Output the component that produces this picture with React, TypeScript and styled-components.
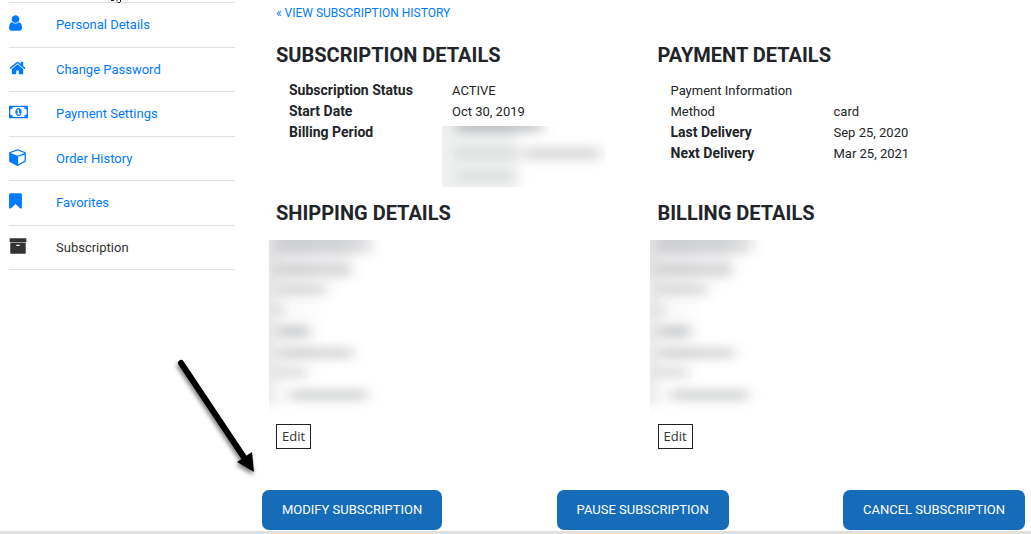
import React from "react";
import styled, { createGlobalStyle } from "styled-components";

const GlobalStyle = createGlobalStyle`
  * { box-sizing: border-box; }
  body {
    margin: 0;
    background: #fff;
    color: #212529;
    font-family: Roboto, "Liberation Sans", sans-serif;
    font-size: 13px;
    line-height: 21px;
    overflow-x: hidden;
  }
  a { color: #007bff; text-decoration: none; }
`;

const Page = styled.div`
  position: relative;
  border-bottom: 3px solid #e1e1e1;
`;

const Layout = styled.div`
  display: grid;
  grid-template-columns: 226px minmax(0, 1fr);
  column-gap: 27px;
  padding: 2px 6px 1px 9px;
`;

const NavList = styled.ul`
  display: flex;
  flex-direction: column;
  align-self: start;
  margin: 0;
  padding: 0;
  min-height: 268px;
  list-style: none;
  border-top: 1px solid #e0e0e0;
`;

const NavItem = styled.li`
  display: flex;
  flex: 1;
  border-bottom: 1px solid #e0e0e0;
`;

const NavLink = styled.a<{ $current?: boolean }>`
  display: grid;
  grid-template-columns: 47px 1fr;
  align-items: center;
  flex: 1;
  && { color: ${(p) => (p.$current ? "#333" : "#007bff")}; }
  svg { display: block; fill: currentColor; margin-bottom: 3px; }
`;

const Main = styled.main`
  display: flex;
  flex-direction: column;
`;

const BackLink = styled.a`
  align-self: flex-start;
  margin: 1px 14px 19px;
  font-size: 12px;
`;

const Columns = styled.div`
  display: grid;
  grid-template-columns: 1fr 1fr;
  row-gap: 14px;
`;

const Panel = styled.section`
  padding-left: 14px;
`;

const Title = styled.h2`
  margin: 0 0 13px;
  font-size: 20px;
  line-height: 24px;
  font-weight: 700;
`;

const Details = styled.dl`
  display: grid;
  grid-template-columns: 163px 1fr;
  margin: 0;
  padding-left: 13px;
`;

const Term = styled.dt<{ $plain?: boolean }>`
  font-size: ${(p) => (p.$plain ? 13 : 14)}px;
  font-weight: ${(p) => (p.$plain ? 400 : 700)};
  padding-right: ${(p) => (p.$plain ? 20 : 0)}px;
`;

const Value = styled.dd`
  margin: 0;
  align-self: end;
`;

const Redacted = styled.div<{ $width: number; $height: number; $margin: string }>`
  width: ${(p) => p.$width}px;
  height: ${(p) => p.$height}px;
  margin: ${(p) => p.$margin};
  overflow: hidden;
  svg { display: block; }
`;

const EditButton = styled.button`
  display: block;
  height: 25px;
  padding: 0 5px;
  border: 1px solid #222;
  background: #fff;
  color: #333;
  font: 13px/23px "Open Sans", sans-serif;
`;

const Actions = styled.div`
  display: flex;
  justify-content: space-between;
  margin-top: 41px;
`;

const ActionButton = styled.button`
  height: 40px;
  padding: 0 20px;
  border: 0;
  border-radius: 7px;
  background: #166cb8;
  color: #fff;
  font: 400 13px/20px Roboto, "Liberation Sans", sans-serif;
`;

const Arrow = styled.svg`
  position: absolute;
  left: 170px;
  top: 352px;
  pointer-events: none;
`;

const Pointer = styled.svg`
  position: absolute;
  left: 110px;
  top: 0;
`;

type IconSpec = { box: string; width: number; d: string };

const icons: Record<string, IconSpec> = {
  user: { box: "256 0 1280 1792", width: 13, d: "M1536 1399q0 109-62.5 187t-150.5 78h-854q-88 0-150.5-78t-62.5-187q0-85 8.5-160.5t31.5-152 58.5-131 94-89 134.5-34.5q131 128 313 128t313-128q76 0 134.5 34.5t94 89 58.5 131 31.5 152 8.5 160.5zm-256-887q0 159-112.5 271.5t-271.5 112.5-271.5-112.5-112.5-271.5 112.5-271.5 271.5-112.5 271.5 112.5 112.5 271.5z" },
  home: { box: "32 0 1728 1792", width: 17, d: "M1472 992v480q0 26-19 45t-45 19h-384v-384h-256v384h-384q-26 0-45-19t-19-45v-480q0-1 .5-3t.5-3l575-474 575 474q1 2 1 6zm223-69l-62 74q-8 9-21 11h-3q-13 0-21-7l-692-577-692 577q-12 8-24 7-13-2-21-11l-62-74q-8-10-7-23.5t11-21.5l719-599q32-26 76-26t76 26l244 204v-195q0-14 9-23t23-9h192q14 0 23 9t9 23v408l219 182q10 8 11 21.5t-7 23.5z" },
  money: { box: "0 0 1920 1792", width: 19, d: "M768 1152h384v-96h-128v-448h-114l-148 137 77 80q42-37 55-57h2v288h-128v96zm512-256q0 70-21 142t-59.500 134-101.500 101-138 39-138-39-101.500-101-59.500-134-21-142 21-142 59.500-134 101.500-101 138-39 138 39 101.500 101 59.500 134 21 142zm512 256v-512q-106 0-181-75t-75-181h-1152q0 106-75 181t-181 75v512q106 0 181 75t75 181h1152q0-106 75-181t181-75zm128-832v1152q0 26-19 45t-45 19h-1792q-26 0-45-19t-19-45v-1152q0-26 19-45t45-19h1792q26 0 45 19t19 45z" },
  cube: { box: "64 0 1664 1792", width: 17, d: "M960 1629l640-349v-636l-640 233v752zm-64-865l698-254-698-254-698 254zm832-252v768q0 35-18 65t-49 47l-704 384q-28 16-61 16t-61-16l-704-384q-31-17-49-47t-18-65v-768q0-40 23-73t61-47l704-256q22-8 44-8t44 8l704 256q38 14 61 47t23 73z" },
  bookmark: { box: "256 0 1280 1792", width: 13, d: "M1420 128q23 0 44 9 33 13 52.5 41t19.5 62v1289q0 34-19.5 62t-52.5 41q-19 8-44 8-48 0-83-32l-441-424-441 424q-36 33-83 33-23 0-44-9-33-13-52.5-41t-19.5-62v-1289q0-34 19.5-62t52.5-41q21-9 44-9h1048z" },
  archive: { box: "0 0 1792 1792", width: 18, d: "M1088 832q0-26-19-45t-45-19h-256q-26 0-45 19t-19 45 19 45 45 19h256q26 0 45-19t19-45zm576-192v960q0 26-19 45t-45 19h-1408q-26 0-45-19t-19-45v-960q0-26 19-45t45-19h1408q26 0 45 19t19 45zm64-448v256q0 26-19 45t-45 19h-1536q-26 0-45-19t-19-45v-256q0-26 19-45t45-19h1536q26 0 45 19t19 45z" },
};

const Icon = ({ name }: { name: string }) => (
  <svg width={icons[name].width} height={18} viewBox={icons[name].box} aria-hidden="true">
    <path d={icons[name].d} />
  </svg>
);

const navigation = [
  { icon: "user", label: "Personal Details" },
  { icon: "home", label: "Change Password" },
  { icon: "money", label: "Payment Settings" },
  { icon: "cube", label: "Order History" },
  { icon: "bookmark", label: "Favorites" },
  { icon: "archive", label: "Subscription", current: true },
];

type Bar = [x: number, y: number, width: number, height: number, opacity: number];

const periodBars: Bar[] = [
  [-20, -20, 96, 110, 0.07],
  [14, -8, 86, 15, 0.22],
  [12, 20, 66, 14, 0.08],
  [82, 20, 76, 15, 0.15],
  [14, 44, 60, 12, 0.08],
];

const addressBars: Bar[] = [
  [-20, -20, 28, 186, 0.09],
  [0, -20, 82, 60, 0.06],
  [0, -20, 44, 150, 0.02],
  [8, -12, 94, 26, 0.15],
  [8, 23, 74, 13, 0.12],
  [8, 43, 50, 13, 0.14],
  [4, 64, 12, 12, 0.1],
  [10, 85, 30, 13, 0.2],
  [10, 107, 74, 12, 0.17],
  [6, 127, 32, 12, 0.13],
  [20, 149, 78, 12, 0.18],
];

const Smudge = ({ id, width, height, bars }: { id: string; width: number; height: number; bars: Bar[] }) => (
  <svg width={width} height={height} aria-hidden="true">
    <filter id={id} filterUnits="userSpaceOnUse" x="-30" y="-30" width={width + 60} height={height + 60} colorInterpolationFilters="sRGB">
      <feGaussianBlur stdDeviation="7 5" />
    </filter>
    <g filter={`url(#${id})`}>
      {bars.map(([x, y, w, h, o], i) => (
        <rect key={i} x={x} y={y} width={w} height={h} fill="#20252c" opacity={o} />
      ))}
    </g>
  </svg>
);

export default function App() {
  return (
    <Page>
      <GlobalStyle />
      <Layout>
        <nav>
          <NavList>
            {navigation.map((item) => (
              <NavItem key={item.label}>
                <NavLink href="#" $current={item.current}>
                  <Icon name={item.icon} />
                  {item.label}
                </NavLink>
              </NavItem>
            ))}
          </NavList>
        </nav>
        <Main>
          <BackLink href="#">« VIEW SUBSCRIPTION HISTORY</BackLink>
          <Columns>
            <Panel>
              <Title>SUBSCRIPTION DETAILS</Title>
              <Details>
                <Term>Subscription Status</Term>
                <Value>ACTIVE</Value>
                <Term>Start Date</Term>
                <Value>Oct 30, 2019</Value>
                <Term>Billing Period</Term>
                <Value>
                  <Redacted $width={164} $height={61} $margin="4px 0 0 -10px">
                    <Smudge id="smudge-period" width={164} height={61} bars={periodBars} />
                  </Redacted>
                </Value>
              </Details>
            </Panel>
            <Panel>
              <Title>PAYMENT DETAILS</Title>
              <Details>
                <Term $plain>Payment Information Method</Term>
                <Value>card</Value>
                <Term>Last Delivery</Term>
                <Value>Sep 25, 2020</Value>
                <Term>Next Delivery</Term>
                <Value>Mar 25, 2021</Value>
              </Details>
            </Panel>
            <Panel>
              <Title>SHIPPING DETAILS</Title>
              <Redacted $width={112} $height={176} $margin="15px 0 8px -7px">
                <Smudge id="smudge-shipping" width={112} height={176} bars={addressBars} />
              </Redacted>
              <EditButton type="button">Edit</EditButton>
            </Panel>
            <Panel>
              <Title>BILLING DETAILS</Title>
              <Redacted $width={118} $height={176} $margin="15px 0 8px -8px">
                <Smudge id="smudge-billing" width={118} height={176} bars={addressBars} />
              </Redacted>
              <EditButton type="button">Edit</EditButton>
            </Panel>
          </Columns>
          <Actions>
            <ActionButton type="button">MODIFY SUBSCRIPTION</ActionButton>
            <ActionButton type="button">PAUSE SUBSCRIPTION</ActionButton>
            <ActionButton type="button">CANCEL SUBSCRIPTION</ActionButton>
          </Actions>
        </Main>
      </Layout>
      <Pointer width="14" height="4" aria-hidden="true">
        <path d="M1 .5h3M7 0v1.500M7.500 2.500h2.500M10.500 0v2" stroke="#222" fill="none" />
      </Pointer>
      <Arrow width="96" height="130" aria-hidden="true">
        <filter id="arrow-shadow" x="-20%" y="-20%" width="140%" height="140%">
          <feDropShadow dx="-1" dy="3" stdDeviation="2" floodOpacity="0.5" />
        </filter>
        <g filter="url(#arrow-shadow)">
          <path d="M11 11L75 107" stroke="#000" strokeWidth="6" strokeLinecap="round" />
          <path d="M84 120L67 110L82 100Z" fill="#000" />
        </g>
      </Arrow>
    </Page>
  );
}
